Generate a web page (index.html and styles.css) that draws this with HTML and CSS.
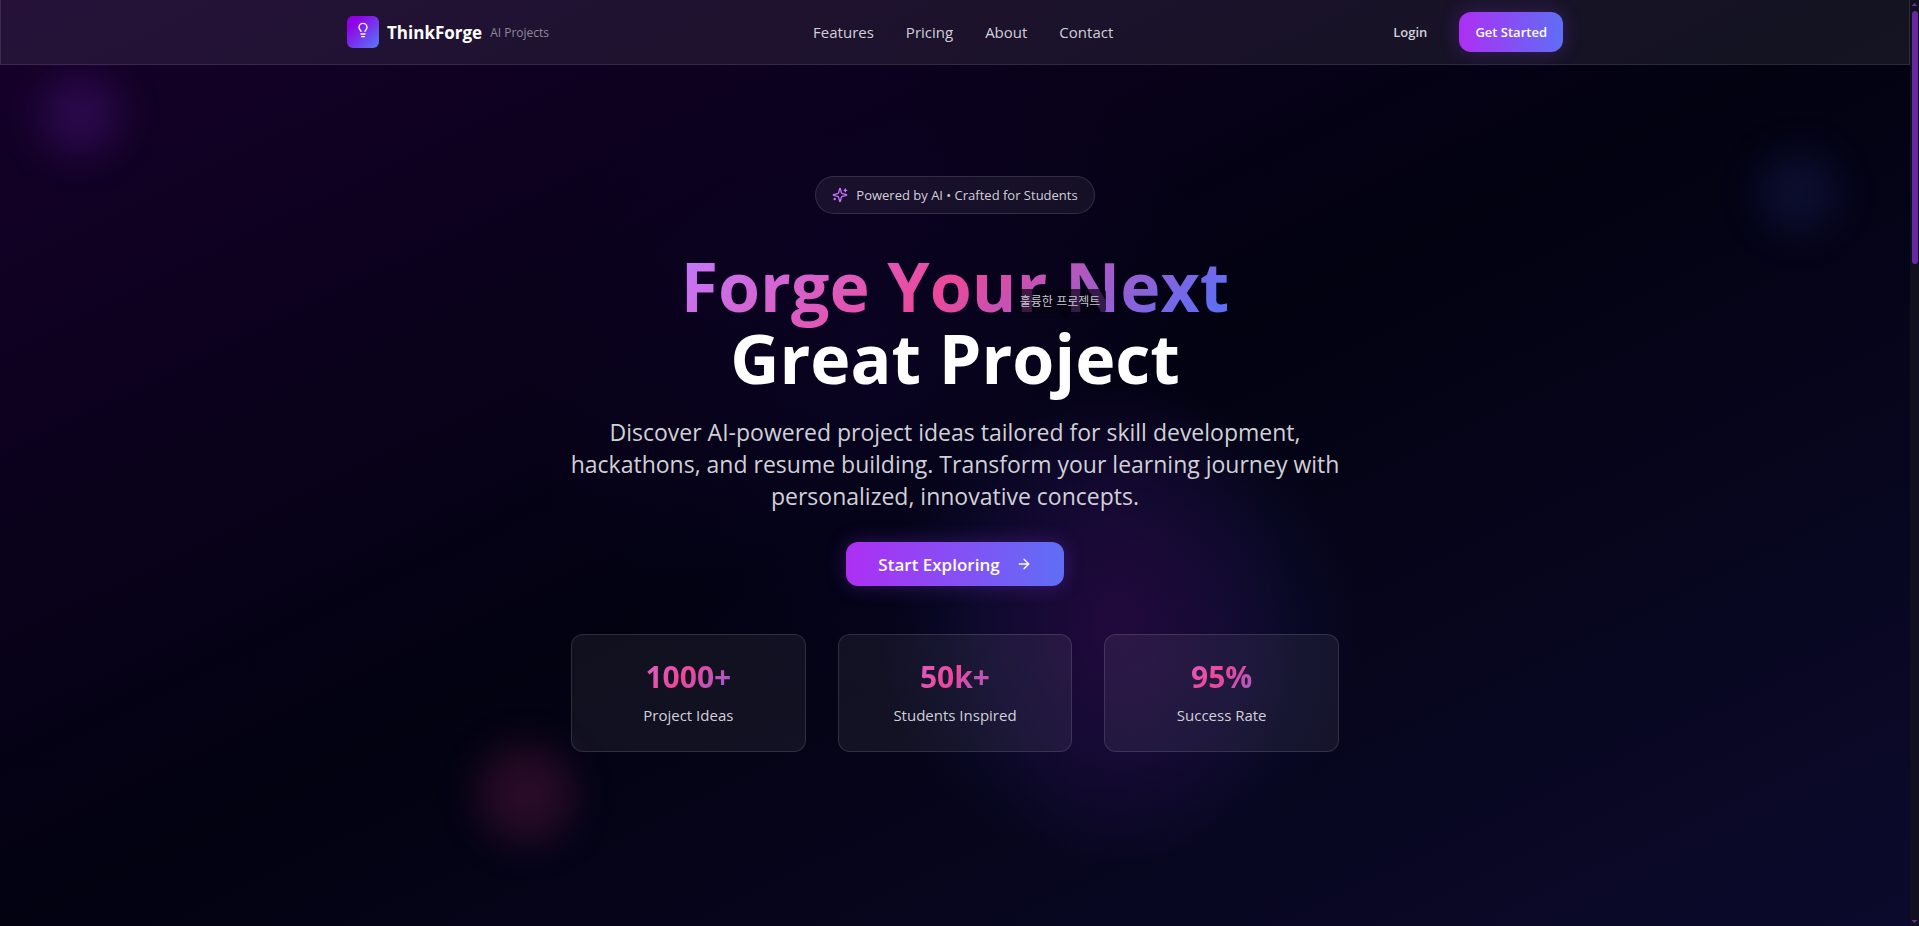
FILE: index.html
```html
<!DOCTYPE html>
<html lang="en">
<head>
<meta charset="utf-8">
<title>ThinkForge – AI Projects</title>
<link rel="stylesheet" href="styles.css">
</head>
<body>
<div class="page">
  <header class="topbar">
    <div class="topbar-inner">
      <a class="brand" href="#">
        <span class="brand-mark">
          <svg width="16" height="16" viewBox="0 0 24 24" fill="none" stroke="currentColor" stroke-width="2" stroke-linecap="round" stroke-linejoin="round"><path d="M15 14c.2-1 .7-1.700 1.500-2.500 1-.9 1.500-2.200 1.500-3.500A6 6 0 0 0 6 8c0 1 .2 2.200 1.500 3.500.7.7 1.300 1.500 1.500 2.500"/><path d="M9 18h6"/><path d="M10 22h4"/></svg>
        </span>
        <span class="brand-name">ThinkForge</span>
        <span class="brand-tag">AI Projects</span>
      </a>
      <nav class="nav">
        <a href="#">Features</a>
        <a href="#">Pricing</a>
        <a href="#">About</a>
        <a href="#">Contact</a>
      </nav>
      <div class="actions">
        <button class="login" type="button">Login</button>
        <button class="cta cta-small" type="button">Get Started</button>
      </div>
    </div>
  </header>
  <main class="hero">
    <div class="orb orb-purple"></div>
    <div class="orb orb-blue"></div>
    <div class="orb orb-pink"></div>
    <div class="glow"></div>
    <div class="hero-content">
      <p class="pill">
        <svg width="16" height="16" viewBox="0 0 24 24" fill="none" stroke="currentColor" stroke-width="2" stroke-linecap="round" stroke-linejoin="round"><path d="M9.937 15.500A2 2 0 0 0 8.500 14.063l-6.135-1.582a.5.5 0 0 1 0-.962L8.500 9.936A2 2 0 0 0 9.937 8.500l1.582-6.135a.5.5 0 0 1 .963 0L14.063 8.500A2 2 0 0 0 15.500 9.937l6.135 1.581a.5.5 0 0 1 0 .964L15.500 14.063a2 2 0 0 0-1.437 1.437l-1.582 6.135a.5.5 0 0 1-.963 0z"/><path d="M20 3v4"/><path d="M22 5h-4"/><path d="M4 17v2"/><path d="M5 18H3"/></svg>
        <span>Powered by AI • Crafted for Students</span>
      </p>
      <h1 class="title">
        <span class="title-top">Forge Your Next</span>
        <span class="title-bottom">Great Project</span>
        <span class="tip" lang="ko">훌륭한 프로젝트</span>
      </h1>
      <p class="lead">Discover AI-powered project ideas tailored for skill development, hackathons, and resume building. Transform your learning journey with personalized, innovative concepts.</p>
      <button class="cta cta-large" type="button">
        <span>Start Exploring</span>
        <svg width="16" height="16" viewBox="0 0 24 24" fill="none" stroke="currentColor" stroke-width="2" stroke-linecap="round" stroke-linejoin="round"><path d="M5 12h14"/><path d="m12 5 7 7-7 7"/></svg>
      </button>
      <div class="stats">
        <div class="stat"><strong>1000+</strong><span>Project Ideas</span></div>
        <div class="stat"><strong>50k+</strong><span>Students Inspired</span></div>
        <div class="stat"><strong>95%</strong><span>Success Rate</span></div>
      </div>
    </div>
  </main>
</div>
<div class="scrollbar" aria-hidden="true">
  <span class="arrow arrow-up"></span>
  <span class="track"><span class="thumb"></span></span>
  <span class="arrow arrow-down"></span>
</div>
</body>
</html>
```

FILE: styles.css
```css
* { box-sizing: border-box; }

body {
  margin: 0;
  display: flex;
  height: 100vh;
  overflow: hidden;
  background: #030014;
  color: #fff;
  font-family: "Open Sans", "Noto Sans", sans-serif;
  font-size: 15px;
}

button { border: 0; font: inherit; color: inherit; }
a { color: inherit; text-decoration: none; }
svg { display: block; flex: none; }

.page {
  flex: 1;
  display: flex;
  flex-direction: column;
  min-width: 0;
  background:
    radial-gradient(circle at 46% 40%, rgba(30, 10, 90, 0.18), transparent 30%),
    linear-gradient(to bottom right, #16002a 0%, #020211 50%, #0c0a2c 100%);
}

.topbar {
  border: 1px solid rgba(255, 255, 255, 0.1);
  border-top: 0;
  background: rgba(255, 255, 255, 0.07);
}

.topbar-inner {
  display: flex;
  align-items: center;
  justify-content: space-between;
  max-width: 1280px;
  height: 64px;
  margin: 0 auto;
  padding: 0 32px;
}

.brand { display: flex; align-items: center; gap: 8px; }

.brand-mark {
  display: flex;
  justify-content: center;
  width: 32px;
  height: 32px;
  padding-top: 6px;
  border-radius: 6px;
  background: linear-gradient(135deg, #9200e6 20%, #5b6cf5 90%);
}

.brand-name { font-size: 17px; font-weight: 700; }
.brand-tag { font-size: 12px; color: #8e8a9c; }

.nav { display: flex; gap: 32px; color: #d1d0d8; }

.actions { display: flex; align-items: center; gap: 16px; }
.login { padding: 0 16px; background: none; font-size: 13px; font-weight: 600; color: #d1d0d8; }

.cta {
  display: flex;
  align-items: center;
  border-radius: 12px;
  background: linear-gradient(90deg, #ad2ff3, #5f6ef5);
  box-shadow: 0 0 20px rgba(139, 60, 246, 0.3);
}
.cta-small { height: 40px; padding: 0 16px; font-size: 13px; font-weight: 600; }
.cta-large { gap: 16px; height: 44px; margin-top: 30px; padding: 0 32px; font-size: 17px; font-weight: 600; }

.hero {
  position: relative;
  flex: 1;
  overflow: hidden;
  padding: 111px 24px 0;
}

.orb { position: absolute; border-radius: 50%; filter: blur(20px); }
.orb-purple { left: 40px; top: 10px; width: 80px; height: 80px; background: rgba(130, 40, 220, 0.22); }
.orb-blue { right: 72px; top: 87px; width: 80px; height: 80px; background: rgba(79, 90, 230, 0.13); }
.orb-pink { left: 25%; bottom: 84px; width: 96px; height: 96px; background: rgba(219, 50, 130, 0.18); }

.glow {
  position: absolute;
  left: 46%;
  top: 320px;
  width: 480px;
  height: 480px;
  background:
    radial-gradient(36% 50% at 50% 50%, rgba(60, 5, 75, 0.4), rgba(60, 5, 75, 0.2) 50%, transparent),
    radial-gradient(closest-side, rgba(45, 35, 130, 0.24) 20%, rgba(40, 40, 130, 0.18) 55%, transparent);
}

.hero-content {
  position: relative;
  display: flex;
  flex-direction: column;
  align-items: center;
  max-width: 800px;
  margin: 0 auto;
  text-align: center;
}

.pill {
  display: flex;
  align-items: center;
  gap: 8px;
  height: 38px;
  margin: 0;
  padding: 0 16px;
  border: 1px solid rgba(255, 255, 255, 0.12);
  border-radius: 19px;
  background: rgba(255, 255, 255, 0.06);
  font-size: 13px;
  color: #d1d0d8;
}
.pill svg { color: #c274ff; }

.title {
  position: relative;
  margin: 36px 0 0;
  font-size: 68px;
  line-height: 72px;
  font-weight: 700;
}
.title-top, .title-bottom { display: block; }
.title-top { margin-bottom: -8px; padding-bottom: 8px; }

.title-top, .stat strong {
  background: linear-gradient(135deg, #c27aff 0%, #ec4899 48%, #5f6ef5 94%);
  -webkit-background-clip: text;
  background-clip: text;
  color: transparent;
}

.tip {
  position: absolute;
  left: 333px;
  top: 39px;
  padding: 0 6px;
  border-radius: 4px;
  background: rgba(5, 1, 16, 0.7);
  font-family: "Noto Sans CJK KR", sans-serif;
  font-size: 12px;
  line-height: 24px;
  font-weight: 400;
  color: #c9c5d1;
  white-space: nowrap;
}
.tip::after {
  content: "";
  position: absolute;
  left: 50%;
  top: 100%;
  border: 6px solid transparent;
  border-top-color: #040110;
}

.lead {
  margin: 22px 0 0;
  font-size: 23px;
  line-height: 32px;
  color: #d1d0d8;
}

.stats {
  display: grid;
  grid-template-columns: repeat(3, 1fr);
  gap: 32px;
  width: 100%;
  max-width: 768px;
  margin-top: 48px;
}
.stat {
  display: flex;
  flex-direction: column;
  gap: 8px;
  padding: 24px;
  border: 1px solid rgba(255, 255, 255, 0.12);
  border-radius: 12px;
  background: rgba(255, 255, 255, 0.06);
}
.stat strong { font-size: 30px; line-height: 36px; }
.stat span { line-height: 24px; color: #d1d0d8; }

.scrollbar {
  display: flex;
  flex-direction: column;
  align-items: center;
  justify-content: space-between;
  width: 9px;
  padding: 3px 0;
  background: #10101f;
}
.arrow { width: 6px; height: 3px; background: #6a2ca8; }
.arrow-up { clip-path: polygon(50% 0, 100% 100%, 0 100%); }
.arrow-down { clip-path: polygon(0 0, 100% 0, 50% 100%); }
.track { flex: 1; width: 6px; margin: 5px 0; }
.thumb { display: block; height: 28%; border-radius: 3px; background: #6629a3; }
```
